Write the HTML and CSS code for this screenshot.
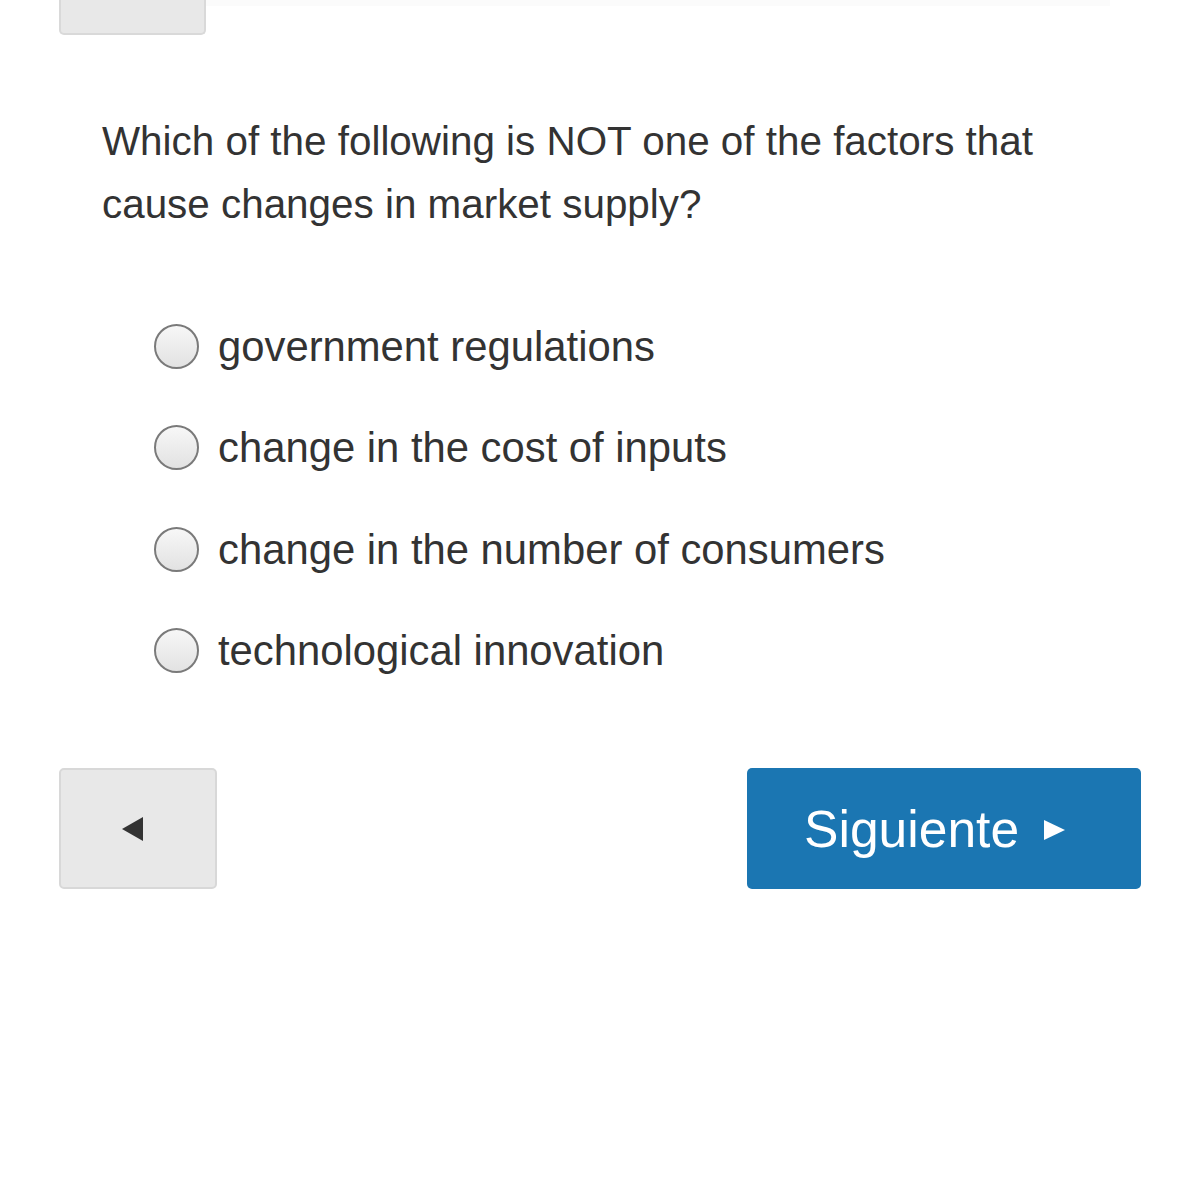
FILE: index.html
```html
<!DOCTYPE html>
<html>
<head>
<meta charset="utf-8">
<link rel="stylesheet" href="styles.css">
</head>
<body>
<div class="page">
  <div class="top-bar"><div class="top-btn"></div><div class="top-line"></div></div>
  <p class="question">Which of the following is NOT one of the factors that cause changes in market supply?</p>
  <ul class="options">
    <li class="option"><span class="radio"></span><span class="label">government regulations</span></li>
    <li class="option"><span class="radio"></span><span class="label">change in the cost of inputs</span></li>
    <li class="option"><span class="radio"></span><span class="label">change in the number of consumers</span></li>
    <li class="option"><span class="radio"></span><span class="label">technological innovation</span></li>
  </ul>
  <div class="nav">
    <button class="btn-back" type="button"><svg width="22" height="24" viewBox="0 0 22 24"><polygon points="0,12 21,0 21,24" fill="#333"/></svg></button>
    <button class="btn-next" type="button"><span>Siguiente</span><svg width="21" height="20" viewBox="0 0 21 20"><polygon points="0,0 21,10 0,20" fill="#fff"/></svg></button>
  </div>
</div>
</body>
</html>
```
FILE: styles.css
```css
html, body {
  margin: 0;
  padding: 0;
  background: #fff;
}
.page {
  width: 1200px;
  font-family: "Liberation Sans", Arial, Helvetica, sans-serif;
  color: #333;
}
.top-bar {
  display: flex;
  align-items: flex-start;
  padding-left: 59px;
}
.top-btn {
  width: 143px;
  height: 33px;
  background: #e8e8e8;
  border: 2px solid #d9d9d9;
  border-top: 0;
  border-radius: 0 0 5px 5px;
}
.top-line {
  flex: 1;
  height: 6px;
  margin-right: 90px;
  background: #fbfbfb;
}
.question {
  margin: 75px 0 0 0;
  padding-left: 102px;
  width: 960px;
  font-size: 40.4px;
  line-height: 63px;
}
.options {
  list-style: none;
  margin: 60px 0 0 0;
  padding: 0 0 0 154px;
}
.option {
  display: flex;
  align-items: center;
  height: 101.3px;
  font-size: 41.8px;
  line-height: 101px;
}
.radio {
  box-sizing: border-box;
  width: 45px;
  height: 45px;
  border-radius: 50%;
  border: 2.5px solid #7a7a7a;
  background: linear-gradient(#f7f7f7, #e2e2e2);
  margin-right: 19px;
  flex: none;
}
.nav {
  display: flex;
  justify-content: space-between;
  margin: 67px 59px 0 59px;
}
.btn-back {
  box-sizing: border-box;
  width: 158px;
  height: 121px;
  background: #e8e8e8;
  border: 2px solid #d8d8d8;
  border-radius: 5px;
  display: flex;
  align-items: center;
  justify-content: center;
  padding: 0 10px 0 0;
}
.btn-next {
  box-sizing: border-box;
  width: 394px;
  height: 121px;
  background: #1b76b2;
  border: 0;
  border-radius: 5px;
  color: #fff;
  display: flex;
  align-items: center;
  gap: 25px;
  padding: 0 0 0 57px;
  font-family: "Liberation Sans", Arial, Helvetica, sans-serif;
  font-size: 51.6px;
}
.btn-next svg {
  margin-top: 2px;
}
```
